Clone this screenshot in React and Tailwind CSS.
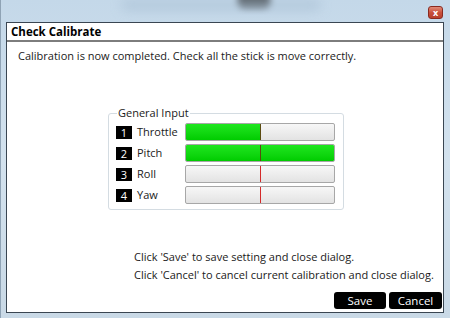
import React from 'react';

const channels = [
    { id: 1, name: 'Throttle', value: 50 },
    { id: 2, name: 'Pitch', value: 100 },
    { id: 3, name: 'Roll', value: 0 },
    { id: 4, name: 'Yaw', value: 0 },
];

const StickBar = ({ value }) => {
    const filled = value > 0;
    return (
        <div className="relative w-[150px] h-[18px] rounded-[2px] border border-[#a7a7a7] bg-gradient-to-b from-[#f7f7f7] to-[#e3e3e3] overflow-hidden">
            {filled && (
                <div
                    className="h-full bg-gradient-to-b from-[#1ee61e] to-[#00cc00]"
                    style={{ width: `${value}%` }}
                />
            )}
            <div
                className={`absolute top-0 bottom-0 left-[74px] w-px ${value >= 50 ? 'bg-[#5a4a10]' : 'bg-[#d42a2a]'}`}
            />
        </div>
    );
};

const App = () => {
    return (
        <div
            className="relative w-[450px] h-[318px] flex flex-col pl-[5px] pr-[6px] pb-[5px] bg-gradient-to-b from-[#c4d8e9] via-[#d3e2ee] to-[#c9d9e6] border-l border-[#8fa3b5] overflow-hidden"
            style={{ fontFamily: '"Open Sans", "Noto Sans", sans-serif' }}
        >
            <div className="absolute left-[236px] top-[-6px] w-[34px] h-[14px] rounded-full bg-[#2a2a2a] blur-[3px] opacity-80" />
            <div className="absolute left-[120px] top-[0px] w-[200px] h-[10px] rounded-full bg-[#a9c0d4] blur-[6px] opacity-70" />

            <div className="relative h-[22px] flex justify-end items-start pt-[6px] pr-[1px]">
                <div className="w-[15px] h-[13px] rounded-[3px] border border-[#8a2a20] bg-gradient-to-b from-[#e08a78] via-[#c9503c] to-[#b8402c] flex items-center justify-center text-white text-[9px] font-bold leading-none">
                    x
                </div>
            </div>

            <div className="relative flex-1 flex flex-col bg-white border border-[#3a4652] text-[11px] leading-[16px] text-[#1a1a1a]">
                <div className="h-[19px] pl-[4px] flex items-center border-b-2 border-[#7d7d7d] font-bold text-[11.5px] text-black">
                    Check Calibrate
                </div>

                <p className="mt-[6px] pl-[11px]">
                    Calibration is now completed. Check all the stick is move correctly.
                </p>

                <fieldset className="mt-[41px] ml-[101px] w-[236px] border border-[#d4dce2] rounded-[3px] pl-[7px] pr-[6px] pb-[5px] pt-[2px]">
                    <legend className="ml-[1px] px-[1px]">General Input</legend>
                    <div className="flex flex-col gap-[3px]">
                        {channels.map((ch) => (
                            <div key={ch.id} className="flex items-center h-[18px]">
                                <div className="w-[16px] h-[13px] bg-black text-white text-[11px] leading-none flex items-center justify-center">
                                    {ch.id}
                                </div>
                                <div className="w-[53px] pl-[5px]">{ch.name}</div>
                                <StickBar value={ch.value} />
                            </div>
                        ))}
                    </div>
                </fieldset>

                <div className="mt-[38px] pl-[127px] leading-[18px]">
                    <p>Click 'Save' to save setting and close dialog.</p>
                    <p>Click 'Cancel' to cancel current calibration and close dialog.</p>
                </div>

                <div className="mt-auto mb-[3px] flex justify-end gap-[3px] pr-[1px]">
                    <button className="w-[52px] h-[17px] rounded-[3px] bg-black text-white text-[11.5px] leading-none">
                        Save
                    </button>
                    <button className="w-[53px] h-[17px] rounded-[3px] bg-black text-white text-[11.5px] leading-none">
                        Cancel
                    </button>
                </div>
            </div>
        </div>
    );
};

export default App;
